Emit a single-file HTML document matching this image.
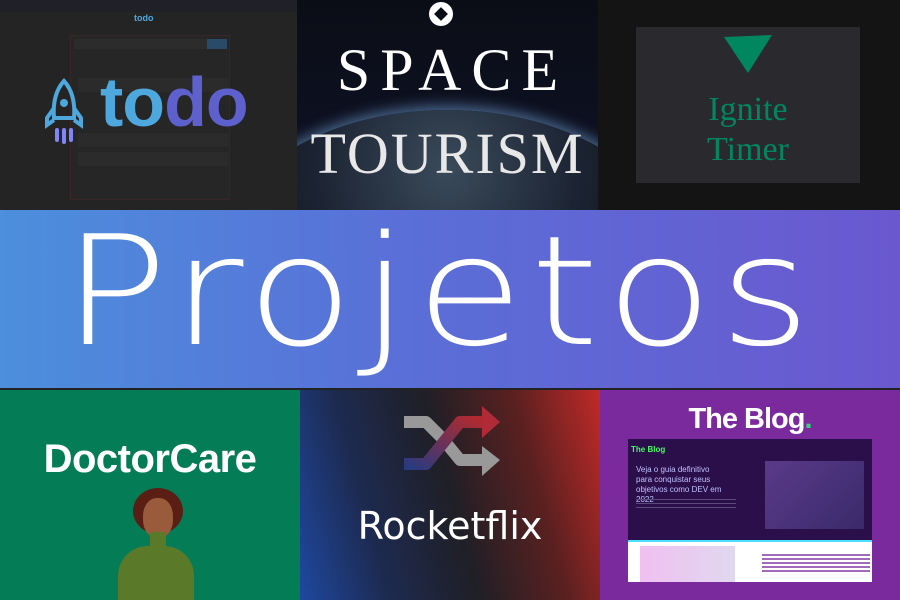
<!DOCTYPE html>
<html><head><meta charset="utf-8"><style>
*{margin:0;padding:0;box-sizing:border-box}
body{width:900px;height:600px;overflow:hidden;position:relative;background:#222;font-family:"Liberation Sans",sans-serif}
.t{position:absolute;overflow:hidden}
</style></head><body>
<!-- todo tile -->
<div class="t" style="left:0;top:0;width:297px;height:210px;background:#242424">
 <div style="position:absolute;left:0;top:0;width:297px;height:12px;background:#1f2028"></div>
 <div style="position:absolute;left:70px;top:35px;width:160px;height:165px;border:1px solid #3a2626;background:#262626"></div>
 <div style="position:absolute;left:74px;top:39px;width:152px;height:10px;background:#2c2c2c"></div>
 <div style="position:absolute;left:207px;top:39px;width:20px;height:10px;background:#2a4a6a"></div>
 <div style="position:absolute;left:78px;top:78px;width:150px;height:14px;background:#2b2b2b"></div>
 <div style="position:absolute;left:78px;top:133px;width:150px;height:14px;background:#2b2b2b"></div>
 <div style="position:absolute;left:78px;top:152px;width:150px;height:14px;background:#2b2b2b"></div>
 <div style="position:absolute;left:134px;top:13px;font-size:9px;font-weight:bold;color:#4ea8de">todo</div>
 <svg style="position:absolute;left:44px;top:78px" width="40" height="68" viewBox="0 0 40 68">
  <path d="M20 3 C10 14 9 28 10 40 L30 40 C31 28 30 14 20 3Z" fill="none" stroke="#4ea8de" stroke-width="4"/>
  <circle cx="20" cy="25" r="4" fill="#4ea8de"/>
  <path d="M10 30 L3 40 L3 47 L10 42 M30 30 L37 40 L37 47 L30 42" fill="none" stroke="#4ea8de" stroke-width="4"/>
  <rect x="11" y="50" width="4" height="14" rx="2" fill="#8284fa"/><rect x="18" y="50" width="4" height="16" rx="2" fill="#8284fa"/><rect x="25" y="50" width="4" height="14" rx="2" fill="#8284fa"/>
 </svg>
 <div style="position:absolute;left:100px;top:62px;font-size:70px;font-weight:900;letter-spacing:-1px;line-height:80px"><span style="color:#4ea8de">to</span><span style="color:#5e60ce">do</span></div>
</div>
<!-- space tourism -->
<div class="t" style="left:297px;top:0;width:301px;height:210px;background:linear-gradient(#0b0d16 0,#0d1020 60%,#1a2230 100%)">
 <div style="position:absolute;left:-80px;top:110px;width:460px;height:300px;border-radius:50%;background:radial-gradient(ellipse at 50% 20%,#3a4a5a 0,#1c2433 40%,#0c1018 70%);box-shadow:0 -4px 14px #4a6a90"></div>
 <div style="position:absolute;left:132px;top:2px;width:24px;height:24px;border-radius:50%;background:#fff"></div>
 <div style="position:absolute;left:137px;top:7px;width:14px;height:14px;background:#0b0d16;transform:rotate(45deg) scale(.7)"></div>
 <div style="position:absolute;left:0;width:301px;top:40px;text-align:center;font-family:'Liberation Serif',serif;font-size:60px;color:#fff;letter-spacing:10px;line-height:60px;padding-left:10px">SPACE</div>
 <div style="position:absolute;left:0;width:301px;top:126px;text-align:center;font-family:'Liberation Serif',serif;font-size:58px;color:#e8e8e8;letter-spacing:2px;line-height:56px">TOURISM</div>
</div>
<!-- ignite timer -->
<div class="t" style="left:598px;top:0;width:302px;height:210px;background:#141414">
 <div style="position:absolute;left:38px;top:27px;width:224px;height:156px;background:#29292e"></div>
 <svg style="position:absolute;left:124px;top:33px" width="52" height="44"><path d="M2 4 L50 2 L26 40Z" fill="#00875f"/></svg>
 <div style="position:absolute;left:38px;width:224px;top:90px;text-align:center;font-family:'Liberation Serif',serif;font-size:34px;color:#00875f;line-height:40px">Ignite<br>Timer</div>
</div>
<!-- projetos band -->
<div class="t" style="left:0;top:210px;width:900px;height:178px;background:linear-gradient(90deg,#4c8fdc 0,#5a6fd8 45%,#6a58cf 100%)">
 <div style="position:absolute;left:0;width:880px;top:6px;text-align:center;color:#fff;font-size:152px;font-weight:200;letter-spacing:6px;line-height:152px;font-family:'DejaVu Sans','Liberation Sans',sans-serif;transform:scaleX(1.15);transform-origin:440px 0">Projetos</div>
</div>
<!-- doctorcare -->
<div class="t" style="left:0;top:390px;width:300px;height:210px;background:#047d57">
 <div style="position:absolute;left:0;width:300px;top:47px;text-align:center;color:#fff;font-size:40px;font-weight:bold;line-height:44px;font-family:'Liberation Sans',sans-serif;letter-spacing:-0.5px">DoctorCare</div>
 <div style="position:absolute;left:133px;top:98px;width:50px;height:46px;border-radius:50%;background:#5a1e14"></div>
 <div style="position:absolute;left:143px;top:108px;width:30px;height:40px;border-radius:45%;background:#9a5a3c"></div>
 <div style="position:absolute;left:118px;top:156px;width:76px;height:60px;border-radius:30px 30px 0 0;background:#5a7a2a"></div>
 <div style="position:absolute;left:150px;top:142px;width:16px;height:18px;background:#5a7a2a"></div>
</div>
<!-- rocketflix -->
<div class="t" style="left:300px;top:390px;width:300px;height:210px;background:linear-gradient(75deg,#1e48a0 0,#1d2a50 25%,#1f1f26 50%,#5a2020 75%,#c02a28 100%)">
 <svg style="position:absolute;left:98px;top:14px" width="104" height="78" viewBox="0 0 104 78">
  <defs><linearGradient id="g" x1="0" y1="1" x2="1" y2="0"><stop offset="0" stop-color="#2a3a80"/><stop offset="1" stop-color="#b02a30"/></linearGradient></defs>
  <path d="M6 18 H28 L44 34 L62 56 H84" fill="none" stroke="#999" stroke-width="12" stroke-linejoin="round"/>
  <path d="M84 42 L102 56 L84 72Z" fill="#999"/>
  <path d="M6 60 H28 L62 18 H84" fill="none" stroke="url(#g)" stroke-width="12" stroke-linejoin="round"/>
  <path d="M84 2 L102 18 L84 34Z" fill="#b02a38"/>
 </svg>
 <div style="position:absolute;left:0;width:300px;top:112px;text-align:center;color:#fff;font-size:38px;line-height:48px;font-family:'DejaVu Sans',sans-serif">Rocketflix</div>
</div>
<!-- the blog -->
<div class="t" style="left:600px;top:390px;width:300px;height:210px;background:#7a2a9c">
 <div style="position:absolute;left:0;width:300px;top:12px;text-align:center;color:#fff;font-size:29px;font-weight:bold;line-height:34px;letter-spacing:-1px">The Blog<span style="color:#2fd37a">.</span></div>
 <div style="position:absolute;left:28px;top:49px;width:244px;height:101px;background:#2a0f4a">
  <div style="position:absolute;left:3px;top:6px;color:#40ff60;font-size:8px;font-weight:bold">The Blog</div>
  <div style="position:absolute;left:8px;top:26px;width:90px;color:#c0c0ff;font-size:8px;line-height:10px">Veja o guia definitivo para conquistar seus objetivos como DEV em 2022</div>
  <div style="position:absolute;left:8px;top:60px;width:100px;height:12px;background:repeating-linear-gradient(#5a4a7a 0 1px,transparent 1px 4px)"></div>
  <div style="position:absolute;left:137px;top:22px;width:99px;height:68px;background:linear-gradient(135deg,#5a3a8a,#3a2a6a)"></div>
 </div>
 <div style="position:absolute;left:28px;top:150px;width:244px;height:42px;background:#fff;border-top:2px solid #4ae0ff">
  <div style="position:absolute;left:12px;top:4px;width:95px;height:36px;background:linear-gradient(90deg,#f0c0f0,#e0d8f0)"></div>
  <div style="position:absolute;left:134px;top:12px;width:108px;height:20px;background:repeating-linear-gradient(#7a2a9c 0 2px,#fff 2px 4px);opacity:.7"></div>
 </div>
</div>
</body></html>
